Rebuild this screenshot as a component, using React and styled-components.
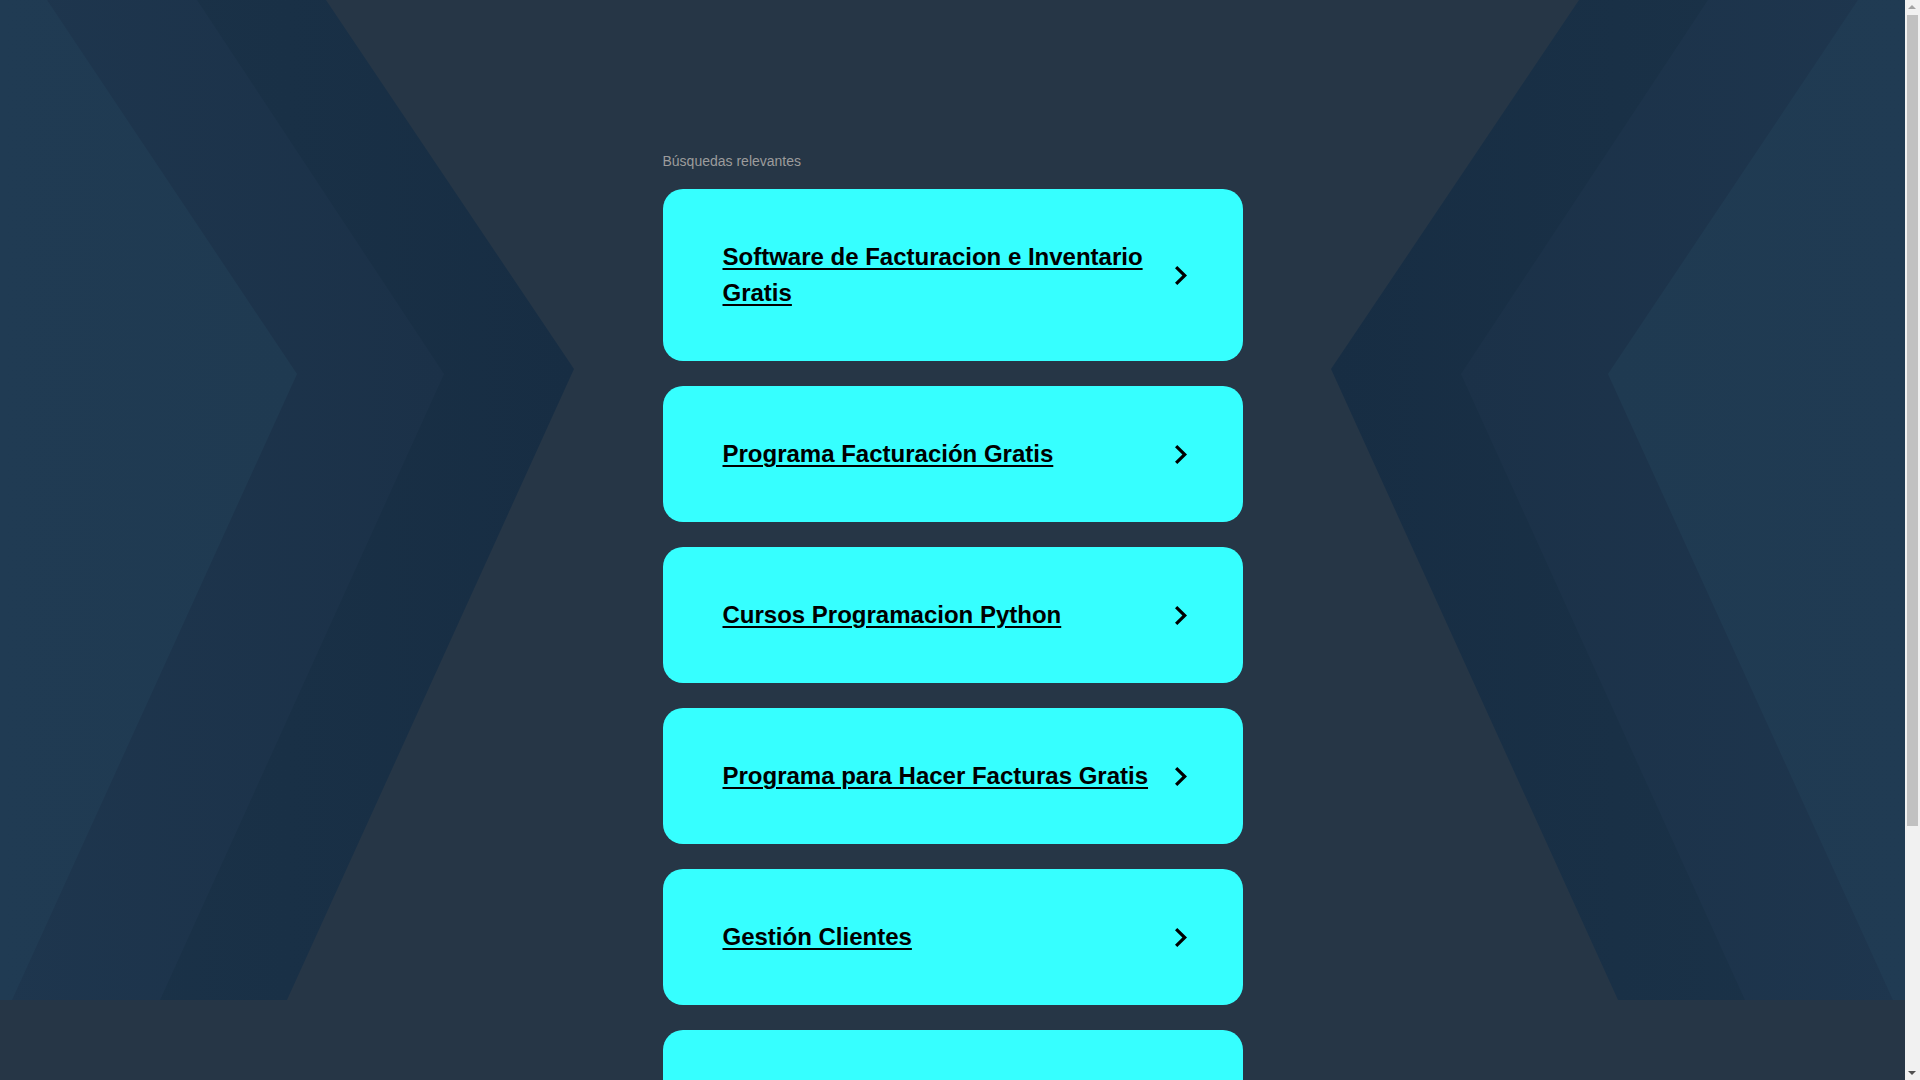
import React from "react";
import styled, { createGlobalStyle } from "styled-components";

const GlobalStyle = createGlobalStyle`
  html, body {
    margin: 0;
    padding: 0;
    background: #263646;
  }
  body {
    font-family: "Liberation Sans", Arial, sans-serif;
  }
`;

const Page = styled.div`
  position: relative;
  width: calc(100% - 15px);
  min-height: 1398px;
  overflow: hidden;
`;

const Backdrop = styled.svg`
  position: absolute;
  top: 0;
  ${(p) => (p.$side === "right" ? "right: 0; transform: scaleX(-1);" : "left: 0;")}
  width: 600px;
  height: 1000px;
  z-index: 0;
  pointer-events: none;
`;

const Main = styled.main`
  position: relative;
  z-index: 1;
  width: 580px;
  margin: 0 auto;
  padding: 153px 0 80px;
`;

const Heading = styled.div`
  font-size: 14px;
  line-height: 16px;
  color: #9c9c9c;
  margin-bottom: 20px;
`;

const List = styled.div`
  display: flex;
  flex-direction: column;
  gap: 25px;
`;

const Card = styled.a`
  display: flex;
  align-items: center;
  gap: 16px;
  box-sizing: border-box;
  width: 580px;
  padding: 50px 56px 50px 60px;
  background: #36ffff;
  border-radius: 20px;
  color: #000;
  text-decoration: none;
  cursor: pointer;
`;

const Title = styled.span`
  flex: 1;
  font-size: 24px;
  line-height: 36px;
  font-weight: 700;
  text-decoration: underline;
  text-decoration-thickness: 2px;
  text-underline-offset: 3px;
`;

const Chevron = styled.svg`
  flex: none;
  width: 12px;
  height: 19px;
`;

const ScrollTrack = styled.div`
  position: fixed;
  top: 0;
  right: 0;
  width: 15px;
  height: 100vh;
  background: #f1f1f1;
  z-index: 10;
`;

const ScrollThumb = styled.div`
  position: absolute;
  top: 15px;
  left: 2px;
  width: 11px;
  height: 811px;
  background: #c1c1c1;
`;

const ScrollArrow = styled.div`
  position: absolute;
  left: 3px;
  width: 0;
  height: 0;
  border-left: 4.5px solid transparent;
  border-right: 4.5px solid transparent;
  ${(p) =>
    p.$dir === "up"
      ? "top: 5px; border-bottom: 4px solid #a3a3a3;"
      : "bottom: 5px; border-top: 4px solid #505050;"}
`;

function BackdropShapes({ side }) {
  return (
    <Backdrop $side={side} viewBox="0 0 600 1000" preserveAspectRatio="none">
      <defs>
        <linearGradient id={`outer-${side}`} x1="0" y1="0" x2="1" y2="0">
          <stop offset="0" stopColor="#1b3349" />
          <stop offset="1" stopColor="#172d43" />
        </linearGradient>
        <linearGradient id={`mid-${side}`} x1="0" y1="0" x2="1" y2="0">
          <stop offset="0" stopColor="#1e364e" />
          <stop offset="1" stopColor="#1b3148" />
        </linearGradient>
        <linearGradient id={`inner-${side}`} x1="0" y1="0" x2="1" y2="0">
          <stop offset="0" stopColor="#203b53" />
          <stop offset="1" stopColor="#1f3a51" />
        </linearGradient>
      </defs>
      <polygon points="0,0 326,0 574,369 287,1000 0,1000" fill={`url(#outer-${side})`} />
      <polygon points="0,0 197,0 444,374 160,1000 0,1000" fill={`url(#mid-${side})`} />
      <polygon points="0,0 47,0 297,374 12,1000 0,1000" fill={`url(#inner-${side})`} />
    </Backdrop>
  );
}

const items = [
  "Software de Facturacion e Inventario Gratis",
  "Programa Facturación Gratis",
  "Cursos Programacion Python",
  "Programa para Hacer Facturas Gratis",
  "Gestión Clientes",
  "Software de Inventario",
];

export default function App() {
  return (
    <>
      <GlobalStyle />
      <Page>
        <BackdropShapes side="left" />
        <BackdropShapes side="right" />
        <Main>
          <Heading>Búsquedas relevantes</Heading>
          <List>
            {items.map((t) => (
              <Card key={t} href="#">
                <Title>{t}</Title>
                <Chevron viewBox="8.59 6 7.41 12" preserveAspectRatio="none">
                  <path d="M10 6L8.59 7.41 13.17 12l-4.58 4.59L10 18l6-6z" fill="#000" />
                </Chevron>
              </Card>
            ))}
          </List>
        </Main>
      </Page>
      <ScrollTrack aria-hidden="true">
        <ScrollArrow $dir="up" />
        <ScrollThumb />
        <ScrollArrow $dir="down" />
      </ScrollTrack>
    </>
  );
}
